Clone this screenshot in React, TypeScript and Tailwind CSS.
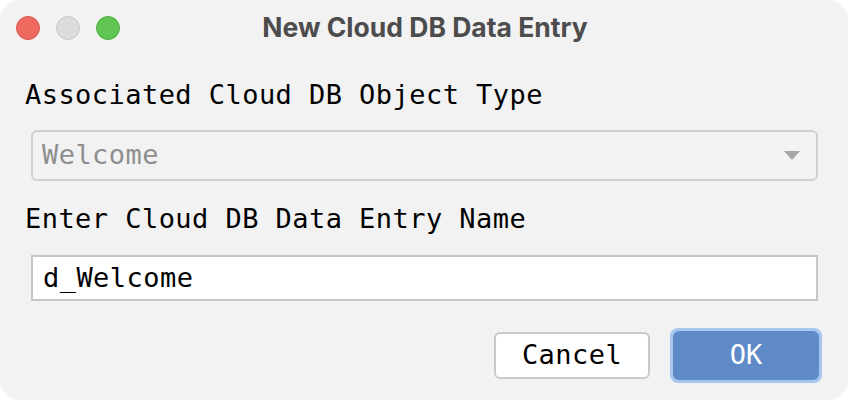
const mono = { fontFamily: '"DejaVu Sans Mono", "Liberation Mono", monospace' };

export default function App() {
  return (
    <div className="h-[400px] w-[848px] bg-white">
      <div className="flex h-full w-full flex-col rounded-[20px] bg-[#f2f2f2]">
        <header className="relative flex h-[56px] items-center justify-center">
          <div className="absolute left-[16px] top-[16px] flex gap-[16px]">
            <span className="h-[24px] w-[24px] rounded-full border border-[#d9564a] bg-[#ee6a5f]" />
            <span className="h-[24px] w-[24px] rounded-full border border-[#c8c8c8] bg-[#dcdcdc]" />
            <span className="h-[24px] w-[24px] rounded-full border border-[#4fae42] bg-[#61c554]" />
          </div>
          <h1
            className="ml-[2px] text-[26.5px] font-bold text-[#4c4c4c]"
            style={{ fontFamily: 'Inter, "Liberation Sans", sans-serif' }}
          >
            New Cloud DB Data Entry
          </h1>
        </header>

        <div className="flex flex-col pl-[25px] pr-[30px]" style={mono}>
          <p className="mt-[22px] text-[27px] leading-[34px] tracking-[0.45px] text-black">
            Associated Cloud DB Object Type
          </p>
          <div className="ml-[6px] mt-[18px] flex h-[51px] items-center justify-between rounded-[6px] border-2 border-[#d0d0d0] bg-[#f2f2f2] pl-[9px] pr-[16px]">
            <span className="text-[27px] tracking-[0.45px] text-[#8e8e8e]">Welcome</span>
            <svg width="16" height="10" viewBox="0 0 16 10">
              <path d="M0 0 H16 L8 9 Z" fill="#a6a6a6" />
            </svg>
          </div>
          <p className="mt-[21px] text-[27px] leading-[34px] tracking-[0.45px] text-black">
            Enter Cloud DB Data Entry Name
          </p>
          <div className="ml-[6px] mt-[19px] flex h-[46px] items-center border-2 border-[#c6c6c6] bg-white pl-[10px]">
            <span className="text-[27px] tracking-[0.45px] text-black">d_Welcome</span>
          </div>
        </div>

        <div className="mt-[27px] flex items-center justify-end gap-[20px] pr-[26px]" style={mono}>
          <button className="flex h-[47px] w-[156px] items-center justify-center rounded-[6px] border-2 border-[#c9c9c9] bg-white text-[27px] tracking-[0.45px] text-black">
            Cancel
          </button>
          <div className="rounded-[8px] bg-[#a7c6f0] p-[3px]">
            <button className="flex h-[49px] w-[146px] items-center justify-center rounded-[6px] bg-[#5e8bc8] text-[27px] text-white">
              OK
            </button>
          </div>
        </div>
      </div>
    </div>
  );
}
